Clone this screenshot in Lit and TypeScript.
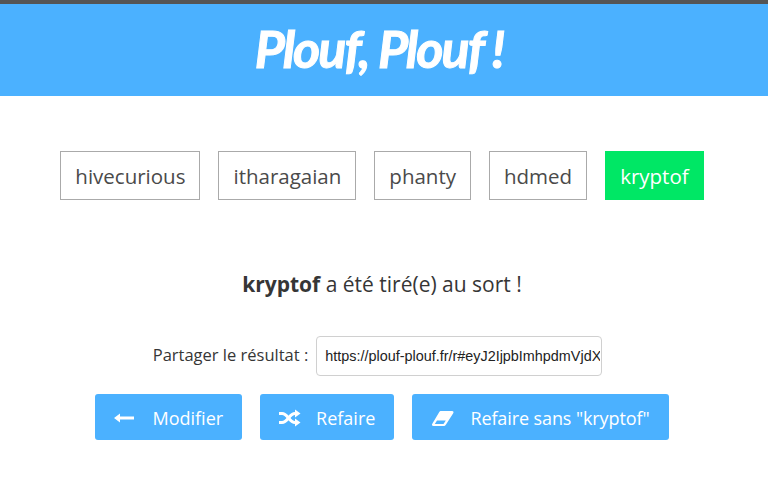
import { LitElement, html, css } from 'lit';
import { customElement } from 'lit/decorators.js';

const names = ['hivecurious', 'itharagaian', 'phanty', 'hdmed', 'kryptof'];
const winner = 'kryptof';

@customElement('app-root')
export class AppRoot extends LitElement {
  static styles = css`
    :host {
      display: block;
      height: 499px;
      overflow: hidden;
      background: #fff;
      color: #363636;
      font-family: "Open Sans", "Noto Sans", sans-serif;
    }
    header {
      height: 89px;
      padding-bottom: 3px;
      border-top: 4px solid #555;
      background: #4bb1ff;
      display: flex;
      align-items: center;
      justify-content: center;
    }
    h1 {
      margin: 0 10px 0 0;
      color: #fff;
      font-family: Lato, "Open Sans", sans-serif;
      font-style: italic;
      font-weight: 700;
      font-size: 52px;
      letter-spacing: -2px;
      line-height: 89px;
      -webkit-text-stroke: 1px #fff;
    }
    .names {
      display: flex;
      justify-content: center;
      gap: 18px;
      margin-top: 55px;
      padding-right: 4px;
    }
    .name {
      box-sizing: border-box;
      height: 49px;
      padding: 0 14px;
      border: 1px solid #aaa;
      display: flex;
      align-items: center;
      font-size: 20.5px;
      color: #4a4a4a;
    }
    .name.win {
      background: #00e765;
      border-color: #00e765;
      color: #fff;
    }
    .result {
      margin: 69px 4px 0 0;
      text-align: center;
      font-size: 21px;
      line-height: 30px;
    }
    .share {
      display: flex;
      justify-content: center;
      align-items: center;
      gap: 8px;
      margin-top: 37px;
      padding-right: 13px;
      font-size: 16.5px;
    }
    .share span {
      margin-bottom: 3px;
    }
    .share input {
      box-sizing: border-box;
      width: 286px;
      height: 40px;
      padding: 0 1px 0 8px;
      border: 1px solid #d0d0d0;
      border-radius: 4px;
      font-family: "Liberation Sans", Arial, sans-serif;
      font-size: 14.4px;
      color: #222;
    }
    .actions {
      display: flex;
      justify-content: center;
      gap: 18px;
      margin-top: 18px;
      padding-right: 4px;
    }
    .btn {
      box-sizing: border-box;
      height: 46px;
      padding: 1px 19px 0;
      border-radius: 3px;
      background: #4bb1ff;
      color: #fff;
      display: flex;
      align-items: center;
      gap: 18px;
      font-size: 18px;
    }
    .btn.shuffle {
      gap: 15px;
    }
    .btn.wide {
      gap: 15px;
      letter-spacing: -0.1px;
    }
    svg {
      width: 20px;
      height: 20px;
      fill: #fff;
      display: block;
    }
    svg.eraser {
      width: 24px;
    }
    svg.lines {
      width: 22px;
    }
    .lines path {
      fill: none;
      stroke: #fff;
      stroke-width: 3;
    }
    .lines path.head {
      fill: #fff;
      stroke: none;
    }
  `;

  render() {
    return html`
      <header><h1>Plouf, Plouf !</h1></header>
      <div class="names">
        ${names.map(n => html`<div class="name ${n === winner ? 'win' : ''}">${n}</div>`)}
      </div>
      <p class="result"><strong>${winner}</strong> a été tiré(e) au sort !</p>
      <div class="share">
        <span>Partager le résultat :</span>
        <input readonly value="https://plouf-plouf.fr/r#eyJ2IjpbImhpdmVjdXJpb3VzIiwiaXRoYXJhZ2FpYW4iXX0" />
      </div>
      <div class="actions">
        <div class="btn">
          <svg viewBox="0 0 20 20"><path d="M0 10l6-4.500V8.500h14v3H6v3z"/></svg>
          Modifier
        </div>
        <div class="btn shuffle">
          <svg class="lines" viewBox="0 0 22 20">
            <path d="M0 5.500h3c6 0 7 9 13 9h1"/>
            <path d="M0 14.500h3c6 0 7-9 13-9h1"/>
            <path class="head" d="M16 1.500l5.500 4-5.500 4zM16 10.500l5.500 4-5.500 4z"/>
          </svg>
          Refaire
        </div>
        <div class="btn wide">
          <svg class="eraser" viewBox="0 0 24 20"><path fill-rule="evenodd" d="M10 3h11c1.500 0 2 1 1.200 2.200L15 16.500c-.8 1.100-1.500 1.500-2.500 1.500H2.500C1 18 .5 17 1.300 15.800L8 4.500C8.500 3.500 9 3 10 3zM6 12.500L3.800 16h8.700l2.300-3.500z"/></svg>
          Refaire sans "${winner}"
        </div>
      </div>
    `;
  }
}
